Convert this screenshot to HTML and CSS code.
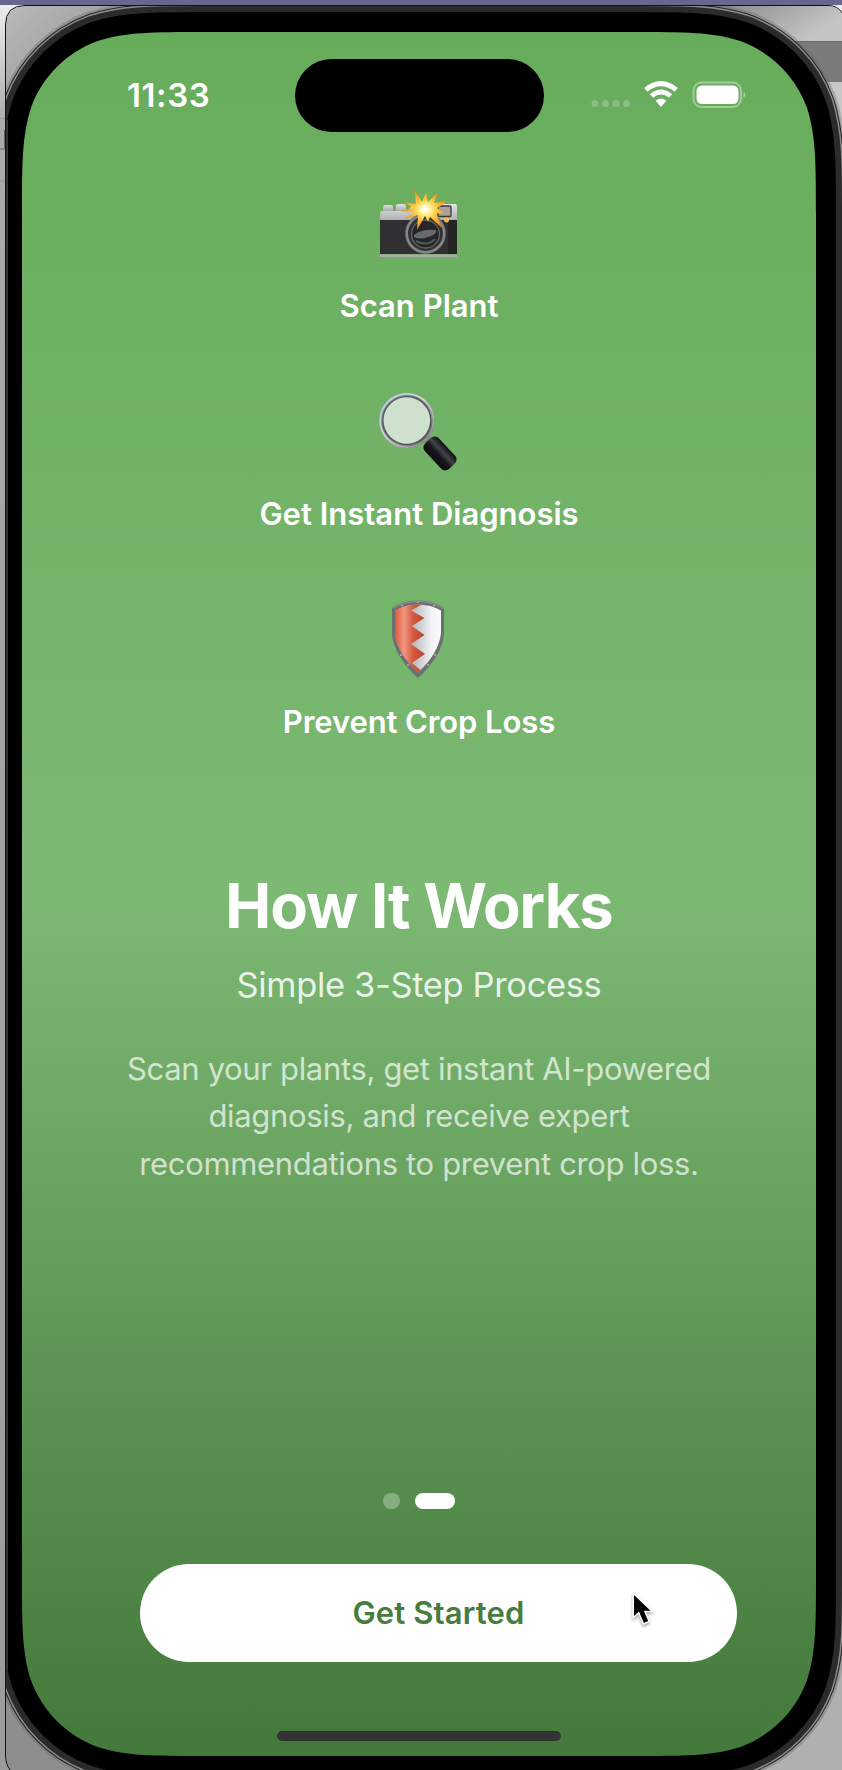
FILE: index.html
```
<!DOCTYPE html>
<html lang="en">
<head>
<meta charset="utf-8">
<title>How It Works</title>
<link rel="stylesheet" href="styles.css">
</head>
<body>
<main class="desktop">
  <svg class="device" viewBox="0 0 842 1770" aria-hidden="true">
    <defs>
      <linearGradient id="screen" x1="0" y1="0" x2="0" y2="1">
        <stop offset="0" stop-color="#67ac5b"/>
        <stop offset=".5" stop-color="#7cb973"/>
        <stop offset="1" stop-color="#43793a"/>
      </linearGradient>
      <linearGradient id="desk" x1="0" y1="0" x2="0" y2="1">
        <stop offset="0" stop-color="#f0f0f0"/>
        <stop offset=".07" stop-color="#aaa"/>
        <stop offset="1" stop-color="#9c9c9c"/>
      </linearGradient>
      <linearGradient id="cornerL" x1="0" y1="0" x2="1" y2="1">
        <stop offset="0" stop-color="#bdbdbd"/>
        <stop offset="1" stop-color="#777"/>
      </linearGradient>
      <linearGradient id="cornerR" x1="0" y1="0" x2="1" y2=".4">
        <stop offset="0" stop-color="#777"/>
        <stop offset="1" stop-color="#c4c4c4"/>
      </linearGradient>
      <clipPath id="win"><path d="M6 25Q6 6 25 6H828Q838 6 842 15V1770H10Q6 1764 6 1755Z"/></clipPath>
      <path id="body" d="M22 215.3c0-52.8 0-79.2 9-107.6c11.3-31.1 35.6-55.4 66.7-66.7c28.4-9 54.8-9 107.6-9h427.4c52.8 0 79.2 0 107.6 9c31.1 11.3 55.4 35.6 66.7 66.7c9 28.4 9 54.8 9 107.6v1357.4c0 52.8 0 79.2-9 107.6c-11.3 31.1-35.6 55.4-66.7 66.7c-28.4 9-54.8 9-107.6 9h-427.4c-52.8 0-79.2 0-107.6-9c-31.1-11.3-55.4-35.6-66.7-66.7c-9-28.4-9-54.8-9-107.6z"/>
    </defs>
    <rect width="842" height="1770" fill="url(#desk)"/>
    <rect width="842" height="5" fill="#64688e"/>
    <path d="M0 118.500H5M0 181H5" stroke="#999"/>
    <path d="M0 149H5M4.500 130V148" stroke="#666"/>
    <g clip-path="url(#win)">
      <rect width="160" height="160" fill="url(#cornerL)"/>
      <rect x="680" width="162" height="41" fill="url(#cornerR)"/>
      <rect x="780" y="41" width="62" height="41" fill="#7b7b7b"/>
      <path d="M780 41.500h62" stroke="#666"/>
      <rect x="820" y="82" width="22" height="60" fill="#c8c8c8"/>
      <rect y="1600" width="120" height="170" fill="#8e8e8e"/>
      <rect x="740" y="1620" width="102" height="150" fill="#b0b0b0"/>
      <use href="#body" fill="none" stroke="#666" stroke-opacity=".35" stroke-width="62"/>
      <use href="#body" fill="none" stroke="#222" stroke-width="57"/>
      <use href="#body" fill="none" stroke="#8b8b8b" stroke-width="55"/>
      <use href="#body" fill="none" stroke="#2b2b2b" stroke-width="52"/>
      <use href="#body" fill="none" stroke="#000" stroke-width="40"/>
      <path d="M7 120V1670" stroke="#333" stroke-width="2"/>
      <use href="#body" fill="url(#screen)"/>
    </g>
    <path d="M842 13Q838 5.500 828 5.500H25Q5.500 5.500 5.500 25V1755Q5.500 1764 10 1770" fill="none" stroke="#111"/>
  </svg>

  <section class="phone">
    <header class="status">
      <span class="time">11:33</span>
      <span class="island"></span>
      <svg class="indicators" viewBox="0 0 160 30" aria-hidden="true">
        <g fill="#fff" fill-opacity=".22"><circle cx="6" cy="23.500" r="3.500"/><circle cx="16.500" cy="23.500" r="3.500"/><circle cx="27" cy="23.500" r="3.500"/><circle cx="37.500" cy="23.500" r="3.500"/></g>
        <g fill="none" stroke="#fff" stroke-width="4.900">
          <path d="M56.800 9.800Q72 -2.500 87.200 9.800"/>
          <path d="M62.500 16Q72 8 81.500 16"/>
        </g>
        <path d="M66.500 20.700Q72 16.500 77.500 20.700L72 27Z" fill="#fff"/>
        <rect x="104.500" y="2.500" width="47.500" height="24.500" rx="8" fill="none" stroke="#fff" stroke-opacity=".38" stroke-width="2"/>
        <rect x="107.500" y="5.500" width="42" height="18.500" rx="5.500" fill="#fff"/>
        <path d="M154.500 11.500Q158 14.500 154.500 18Z" fill="#fff" fill-opacity=".5"/>
      </svg>
    </header>

    <div class="steps">
      <div class="step">
        <svg class="icon" viewBox="-1 0 120 100" aria-hidden="true">
          <defs>
            <linearGradient id="silver" x1="0" y1="0" x2="0" y2="1"><stop offset="0" stop-color="#e4e4e4"/><stop offset="1" stop-color="#aaa"/></linearGradient>
            <radialGradient id="flash" cx=".52" cy=".5" r=".5"><stop offset="0" stop-color="#fff"/><stop offset=".22" stop-color="#fff3a0"/><stop offset=".5" stop-color="#ffc83d"/><stop offset="1" stop-color="#ee8318"/></radialGradient>
          </defs>
          <path d="M23 31V27Q23 25 25 25H31Q33 25 33 27V31M36 31V26Q36 24 38 24H44Q46 24 46 26V31" fill="url(#silver)"/>
          <path d="M20 33Q20 31 22 31H48L53 24H95Q97 24 97 26V42H20Z" fill="url(#silver)"/>
          <path d="M20 40H97V74H20Z" fill="#303032"/>
          <path d="M88 40H97V74H88Z" fill="#252526"/>
          <path d="M20 74.500H97V77H20Z" fill="#aaa"/>
          <rect x="78" y="26" width="13" height="10.500" rx="1" fill="#aaa299" stroke="#383838" stroke-width="1.300"/>
          <circle cx="65.500" cy="53.500" r="20.500" fill="#555"/>
          <circle cx="65.500" cy="53.500" r="18.700" fill="#303132" stroke="#85878a" stroke-width="2.500"/>
          <circle cx="65.500" cy="54" r="14" fill="#252628" stroke="#666" stroke-width="1.300"/>
          <path d="M54 55Q61 49 76 50Q78 54 68 57Q60 60 54 57Z" fill="#68696b"/>
          <path d="M56 61Q67 67 75 59" fill="none" stroke="#555" stroke-width="2"/>
          <circle cx="86.500" cy="40" r="2.500" fill="#f4bd46"/>
          <path d="M54 9L62 22L66 12L68 22L78 12L74 23L88 21L77 28L86 34L76 33L82 48L70 37L68 42L65 36L57 50L58 35L45 39L54 32L41 31L53 28L44 22L56 24Z" fill="url(#flash)"/>
          <circle cx="65" cy="29" r="3.500" fill="#fffce8"/>
        </svg>
        <span class="label">Scan Plant</span>
      </div>
      <div class="step">
        <svg class="icon" viewBox="-1 8 120 100" aria-hidden="true">
          <defs>
            <linearGradient id="rim" x1="0" y1="0" x2="1" y2="1"><stop offset="0" stop-color="#9fb3b8"/><stop offset=".35" stop-color="#70777a"/><stop offset=".65" stop-color="#8a8e90"/><stop offset="1" stop-color="#4c4e50"/></linearGradient>
            <linearGradient id="gleam" x1="0" y1="0" x2="1" y2="1"><stop offset="0" stop-color="#a9cfd8"/><stop offset=".45" stop-color="#d5dcda"/><stop offset="1" stop-color="#77797a"/></linearGradient>
            <linearGradient id="grip" x1="0" y1="0" x2="1" y2="0"><stop offset="0" stop-color="#0b0b0e"/><stop offset=".4" stop-color="#17171b"/><stop offset=".65" stop-color="#42434b"/><stop offset="1" stop-color="#0e0e11"/></linearGradient>
          </defs>
          <path d="M63 59L69 55L74 61L67 66Z" fill="#808383"/>
          <circle cx="46.800" cy="40.500" r="25" fill="#cee1cc" stroke="url(#rim)" stroke-width="5"/>
          <circle cx="46.800" cy="40.500" r="26.600" fill="none" stroke="url(#gleam)" stroke-width="1.800"/>
          <circle cx="46.800" cy="40.500" r="24" fill="none" stroke="#55595b" stroke-width="1.200"/>
          <circle cx="46.800" cy="40.500" r="22.700" fill="none" stroke="#eaf3e8" stroke-opacity=".8"/>
          <rect x="-9.500" y="-17.500" width="19" height="35" rx="5.500" transform="translate(80 73.500) rotate(-43)" fill="url(#grip)"/>
        </svg>
        <span class="label">Get Instant Diagnosis</span>
      </div>
      <div class="step">
        <svg class="icon" viewBox="-1 6 120 100" aria-hidden="true">
          <defs>
            <linearGradient id="red" x1="0" y1="0" x2="1" y2="0"><stop offset="0" stop-color="#dc563d"/><stop offset=".3" stop-color="#f49680"/><stop offset=".6" stop-color="#d35a43"/><stop offset="1" stop-color="#b9442e"/></linearGradient>
            <linearGradient id="white" x1="0" y1="0" x2="1" y2="0"><stop offset="0" stop-color="#aaa"/><stop offset=".45" stop-color="#bfc1c4"/><stop offset=".8" stop-color="#f3f4f7"/><stop offset="1" stop-color="#fafafa"/></linearGradient>
          </defs>
          <path d="M32 18Q43 10.500 58 10.500Q73 10.500 84 18V44Q82 66 58 88Q34 66 32 44Z" fill="#6b706e"/>
          <path d="M33 18.500Q44 11.500 58 11.500Q72 11.500 83 18.500" fill="none" stroke="#929795"/>
          <path d="M35 20.500Q45 14.500 58 14.500Q71 14.500 81 20.500V43Q79 63 58 82.500Q37 63 35 43Z" fill="url(#white)"/>
          <path d="M35 20.500Q45 14.500 58 14.500L61 15L51 20.500L64.500 28L52 36L64.500 45L51 54L65 64L52 73L60.500 80L58 82.500Q37 63 35 43Z" fill="url(#red)"/>
          <g fill="#b9bfbc"><circle cx="58" cy="12.500" r=".8"/><circle cx="74" cy="15.500" r=".8"/><circle cx="42" cy="15.500" r=".8"/><circle cx="41" cy="65" r=".9"/><circle cx="75" cy="65" r=".9"/><circle cx="48" cy="75" r=".9"/><circle cx="68" cy="75" r=".9"/></g>
        </svg>
        <span class="label label-prevent">Prevent Crop Loss</span>
      </div>
    </div>

    <h1 class="title">How It Works</h1>
    <p class="subtitle">Simple 3-Step Process</p>
    <p class="copy">Scan your plants, get instant AI-powered<br>diagnosis, and receive expert<br>recommendations to prevent crop loss.</p>

    <div class="pager"><span class="dot"></span><span class="dot dot-active"></span></div>
    <button class="start">Get Started</button>
    <div class="home"></div>
  </section>

  <svg class="cursor" viewBox="0 0 26 38" aria-hidden="true">
    <path d="M3 3V24L8 19.500L12.800 31L17.200 29L12.800 18.700H19.500Z" fill="#000" stroke="#fff" stroke-width="3" paint-order="stroke"/>
  </svg>
</main>
</body>
</html>
```
FILE: styles.css
```
* { box-sizing: border-box; }
body { margin: 0; }
.desktop {
  position: relative;
  display: flex;
  align-items: flex-start;
  width: 842px;
  height: 1770px;
  overflow: hidden;
  font-family: Inter, "Liberation Sans", sans-serif;
  color: #fff;
}
.device { position: absolute; inset: 0; width: 842px; height: 1770px; }
.phone {
  position: relative;
  width: 794px;
  height: 1724px;
  margin: 32px 0 0 22px;
  display: flex;
  flex-direction: column;
  align-items: center;
}
.status {
  width: 100%;
  height: 148px;
  padding-top: 27px;
  display: flex;
  align-items: flex-start;
}
.time {
  width: 168px;
  margin: 16px 0 0 105px;
  font-size: 33px;
  line-height: 40px;
  font-weight: 600;
  letter-spacing: .6px;
  white-space: nowrap;
}
.island { width: 249px; height: 73px; border-radius: 37px; background: #000; }
.indicators { width: 160px; height: 30px; margin: 21px 0 0 45px; }
.steps { display: flex; flex-direction: column; gap: 62px; }
.step { display: flex; flex-direction: column; align-items: center; }
.icon { width: 120px; height: 100px; margin-bottom: 6px; }
.label { font-size: 31px; line-height: 40px; font-weight: 600; white-space: nowrap; }
.label-prevent { letter-spacing: -.1px; }
.title { margin: 128px 0 0; font-size: 61.500px; line-height: 72px; font-weight: 700; letter-spacing: -1px; white-space: nowrap; }
.subtitle { margin: 23px 0 0; font-size: 34.500px; line-height: 40px; font-weight: 400; letter-spacing: -.37px; color: rgba(255,255,255,.85); white-space: nowrap; }
.copy { margin: 40px 0 0; font-size: 31px; line-height: 47.400px; letter-spacing: -.34px; text-align: center; color: rgba(255,255,255,.7); white-space: nowrap; }
.pager { display: flex; gap: 15px; margin-top: 306px; }
.dot { width: 17px; height: 16px; border-radius: 8px; background: rgba(255,255,255,.3); }
.dot-active { width: 40px; background: #fff; }
.start {
  width: 597px;
  height: 98px;
  margin: 55px 0 0 39px;
  padding: 0;
  border: 0;
  border-radius: 49px;
  background: #fff;
  color: #467d3d;
  font: 600 31px/40px Inter, "Liberation Sans", sans-serif;
  letter-spacing: .15px;
}
.home { width: 284px; height: 10px; margin-top: 69px; border-radius: 5px; background: #333; }
.cursor { position: absolute; left: 631px; top: 1592px; width: 26px; height: 38px; filter: drop-shadow(0 2px 1.500px rgba(0,0,0,.35)); }
```
